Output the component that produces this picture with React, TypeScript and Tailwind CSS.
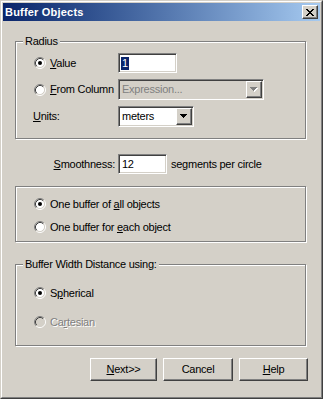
import { ReactNode } from "react";

const sunken =
  "border border-t-[#808080] border-l-[#808080] border-r-white border-b-white shadow-[inset_1px_1px_0_#404040,inset_-1px_-1px_0_#d4d0c8]";
const raised =
  "border border-t-white border-l-white border-r-[#404040] border-b-[#404040] shadow-[inset_-1px_-1px_0_#808080]";

// classic 8x7 close glyph
const X_ROWS = ["11000011", "01100110", "00111100", "00011000", "00111100", "01100110", "11000011"];

function Radio({ checked, disabled }: { checked?: boolean; disabled?: boolean }) {
  return (
    <svg width="12" height="12" viewBox="0 0 12 12" className="shrink-0">
      <circle cx="6" cy="6" r="4.5" fill={disabled ? "#d4d0c8" : "#fff"} />
      <path d="M2.11 9.89 A5.5 5.5 0 0 1 9.89 2.11" fill="none" stroke="#808080" />
      <path d="M9.89 2.11 A5.5 5.5 0 0 1 2.11 9.89" fill="none" stroke="#fff" />
      <path d="M2.82 9.18 A4.5 4.5 0 0 1 9.18 2.82" fill="none" stroke="#404040" />
      <path d="M9.18 2.82 A4.5 4.5 0 0 1 2.82 9.18" fill="none" stroke="#d4d0c8" />
      {checked && <circle cx="6" cy="6" r="2" fill="#000" />}
    </svg>
  );
}

function RadioRow({ checked, disabled, children }: { checked?: boolean; disabled?: boolean; children: ReactNode }) {
  return (
    <div className="flex items-center gap-[4px] h-[16px]">
      <Radio checked={checked} disabled={disabled} />
      <span className={disabled ? "text-[#808080] [text-shadow:1px_1px_0_#fff]" : ""}>{children}</span>
    </div>
  );
}

function Group({ label, className, children }: { label?: string; className: string; children: ReactNode }) {
  return (
    <div className={`relative mr-[2px] border border-[#808080] shadow-[1px_1px_0_#fff,inset_1px_1px_0_#fff] ${className}`}>
      {label && (
        <span className="absolute -top-[7px] left-[7px] bg-[#d4d0c8] px-[2px] leading-[13px]">{label}</span>
      )}
      {children}
    </div>
  );
}

function Arrow({ disabled }: { disabled?: boolean }) {
  const d = "M0 0h7v1h-1v1h-1v1h-1v1h-1v-1h-1v-1h-1v-1h-1z";
  return (
    <svg width="8" height="5" viewBox="0 0 8 5">
      {disabled && <path d={d} fill="#fff" transform="translate(1 1)" />}
      <path d={d} fill={disabled ? "#808080" : "#000"} />
    </svg>
  );
}

function Combo({ width, text, disabled }: { width: string; text: string; disabled?: boolean }) {
  return (
    <div className={`${width} h-[21px] p-px flex ${sunken} ${disabled ? "bg-[#d4d0c8]" : "bg-white"}`}>
      <span className={`flex-1 pl-[2px] leading-[17px] ${disabled ? "text-[#808080]" : ""}`}>{text}</span>
      <div className={`w-[16px] h-[17px] bg-[#d4d0c8] flex items-center justify-center ${raised}`}>
        <Arrow disabled={disabled} />
      </div>
    </div>
  );
}

function Button({ width, children }: { width: string; children: ReactNode }) {
  return (
    <div className={`${width} h-[23px] flex items-center justify-center bg-[#d4d0c8] ${raised}`}>{children}</div>
  );
}

export default function App() {
  return (
    <div className="w-[323px] h-[399px] bg-[#d4d0c8] border border-t-[#d4d0c8] border-l-[#d4d0c8] border-r-[#404040] border-b-[#404040] font-['Liberation_Sans',Arial,sans-serif] text-[11px] tracking-[-0.25px] text-black">
      <div className="h-full flex flex-col p-px border border-t-white border-l-white border-r-[#808080] border-b-[#808080]">
        {/* title bar */}
        <div className="h-[18px] flex items-center pl-[2px] pr-[2px] bg-linear-to-r from-[#0a246a] to-[#a6caf0]">
          <span className="text-white font-bold text-[11px] tracking-[0.2px]">Buffer Objects</span>
          <div className={`ml-auto w-[16px] h-[14px] bg-[#d4d0c8] flex items-center justify-center ${raised}`}>
            <svg width="8" height="7" viewBox="0 0 8 7">
              {X_ROWS.flatMap((row, y) =>
                row.split("").map((c, x) => (c === "1" ? <rect key={`${x}-${y}`} x={x} y={y} width="1" height="1" fill="#000" /> : null))
              )}
            </svg>
          </div>
        </div>

        <div className="flex flex-col px-[12px]">
          <Group label="Radius" className="mt-[20px] pt-[11px] pb-[11px] pl-[18px]">
            <div className="grid grid-cols-[84px_auto] gap-y-[6px] items-center">
              <RadioRow checked>
                <u>V</u>alue
              </RadioRow>
              <div className={`w-[59px] h-[20px] bg-white flex items-center pl-[2px] ${sunken}`}>
                <span className="bg-[#0a246a] text-white px-px leading-[13px]">1</span>
              </div>
              <RadioRow>
                <u>F</u>rom Column
              </RadioRow>
              <Combo width="w-[146px]" text="Expression..." disabled />
              <span className="-ml-px">
                <u>U</u>nits:
              </span>
              <Combo width="w-[76px]" text="meters" />
            </div>
          </Group>

          <div className="mt-[15px] flex items-center">
            <span className="w-[100px] text-right">
              <u>S</u>moothness:
            </span>
            <div className={`ml-[3px] w-[49px] h-[20px] bg-white flex items-center pl-[3px] ${sunken}`}>12</div>
            <span className="ml-[4px]">segments per circle</span>
          </div>

          <Group className="mt-[12px] pt-[9px] pb-[6px] pl-[18px] flex flex-col gap-[7px]">
            <RadioRow checked>
              One buffer of <u>a</u>ll objects
            </RadioRow>
            <RadioRow>
              One buffer for <u>e</u>ach object
            </RadioRow>
          </Group>

          <Group label="Buffer Width Distance using:" className="mt-[22px] pt-[20px] pb-[15px] pl-[18px] flex flex-col gap-[13px]">
            <RadioRow checked>
              S<u>p</u>herical
            </RadioRow>
            <RadioRow disabled>
              Ca<u>r</u>tesian
            </RadioRow>
          </Group>

          <div className="mt-[12px] flex justify-end gap-[6px]">
            <Button width="w-[67px]">
              <span>
                <u>N</u>ext&gt;&gt;
              </span>
            </Button>
            <Button width="w-[70px]">Cancel</Button>
            <Button width="w-[69px]">
              <span>
                <u>H</u>elp
              </span>
            </Button>
          </div>
        </div>
      </div>
    </div>
  );
}
